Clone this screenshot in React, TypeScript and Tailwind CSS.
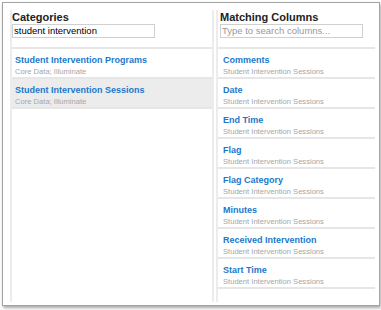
import React from 'react';

const categories = [
  { name: 'Student Intervention Programs', source: 'Core Data; Illuminate', selected: false },
  { name: 'Student Intervention Sessions', source: 'Core Data; Illuminate', selected: true },
];

const columns = [
  'Comments',
  'Date',
  'End Time',
  'Flag',
  'Flag Category',
  'Minutes',
  'Received Intervention',
  'Start Time',
];

const Row: React.FC<{ title: string; sub: string; selected?: boolean; inset: string }> = ({
  title,
  sub,
  selected,
  inset,
}) => (
  <div
    className={`h-[30px] shrink-0 border-b-2 border-[#e6e6e6] pt-[6px] ${inset} ${selected ? 'bg-[#ececec]' : 'bg-white'}`}
  >
    <div className="text-[9px] font-bold leading-[11px] text-[#1b78cc]">{title}</div>
    <div className="mt-[1px] text-[7.6px] leading-[10px] text-[#a6a6a6]">{sub}</div>
  </div>
);

export default function App() {
  return (
    <div className="h-[310px] w-[381px] bg-white pl-[2px] pt-[2px] font-['Liberation_Sans',Arial,sans-serif]">
      <div className="flex h-[304px] w-[378px] gap-[2px] border border-[#a3a3a3] bg-white pl-[7px] pr-[4px] pt-[7px] shadow-[1px_2px_3px_rgba(0,0,0,0.35)]">
        {/* categories */}
        <div className="flex h-[292px] w-[204px] flex-col border-x-2 border-[#ececec]">
          <div className="h-[39px] shrink-0 border-b-2 border-[#e6e6e6] pt-[1px]">
            <div className="text-[11px] font-bold leading-[13px] text-[#222]">Categories</div>
            <div className="h-[14px] w-[143px] border border-[#cfcfcf] px-[1px] text-[9.5px] leading-[12px] text-black">
              student intervention
            </div>
          </div>
          {categories.map((c) => (
            <Row key={c.name} title={c.name} sub={c.source} selected={c.selected} inset="px-[3px]" />
          ))}
        </div>

        {/* columns */}
        <div className="flex h-[292px] flex-1 flex-col border-l-2 border-[#ececec]">
          <div className="h-[39px] shrink-0 border-b-2 border-[#e6e6e6] pl-[2px] pt-[1px]">
            <div className="text-[11px] font-bold leading-[13px] text-[#222]">Matching Columns</div>
            <div className="h-[14px] w-[143px] border border-[#cfcfcf] px-[1px] text-[9.5px] leading-[12px] text-[#9a9a9a]">
              Type to search columns...
            </div>
          </div>
          {columns.map((c) => (
            <Row key={c} title={c} sub="Student Intervention Sessions" inset="px-[5px]" />
          ))}
        </div>
      </div>
    </div>
  );
}
